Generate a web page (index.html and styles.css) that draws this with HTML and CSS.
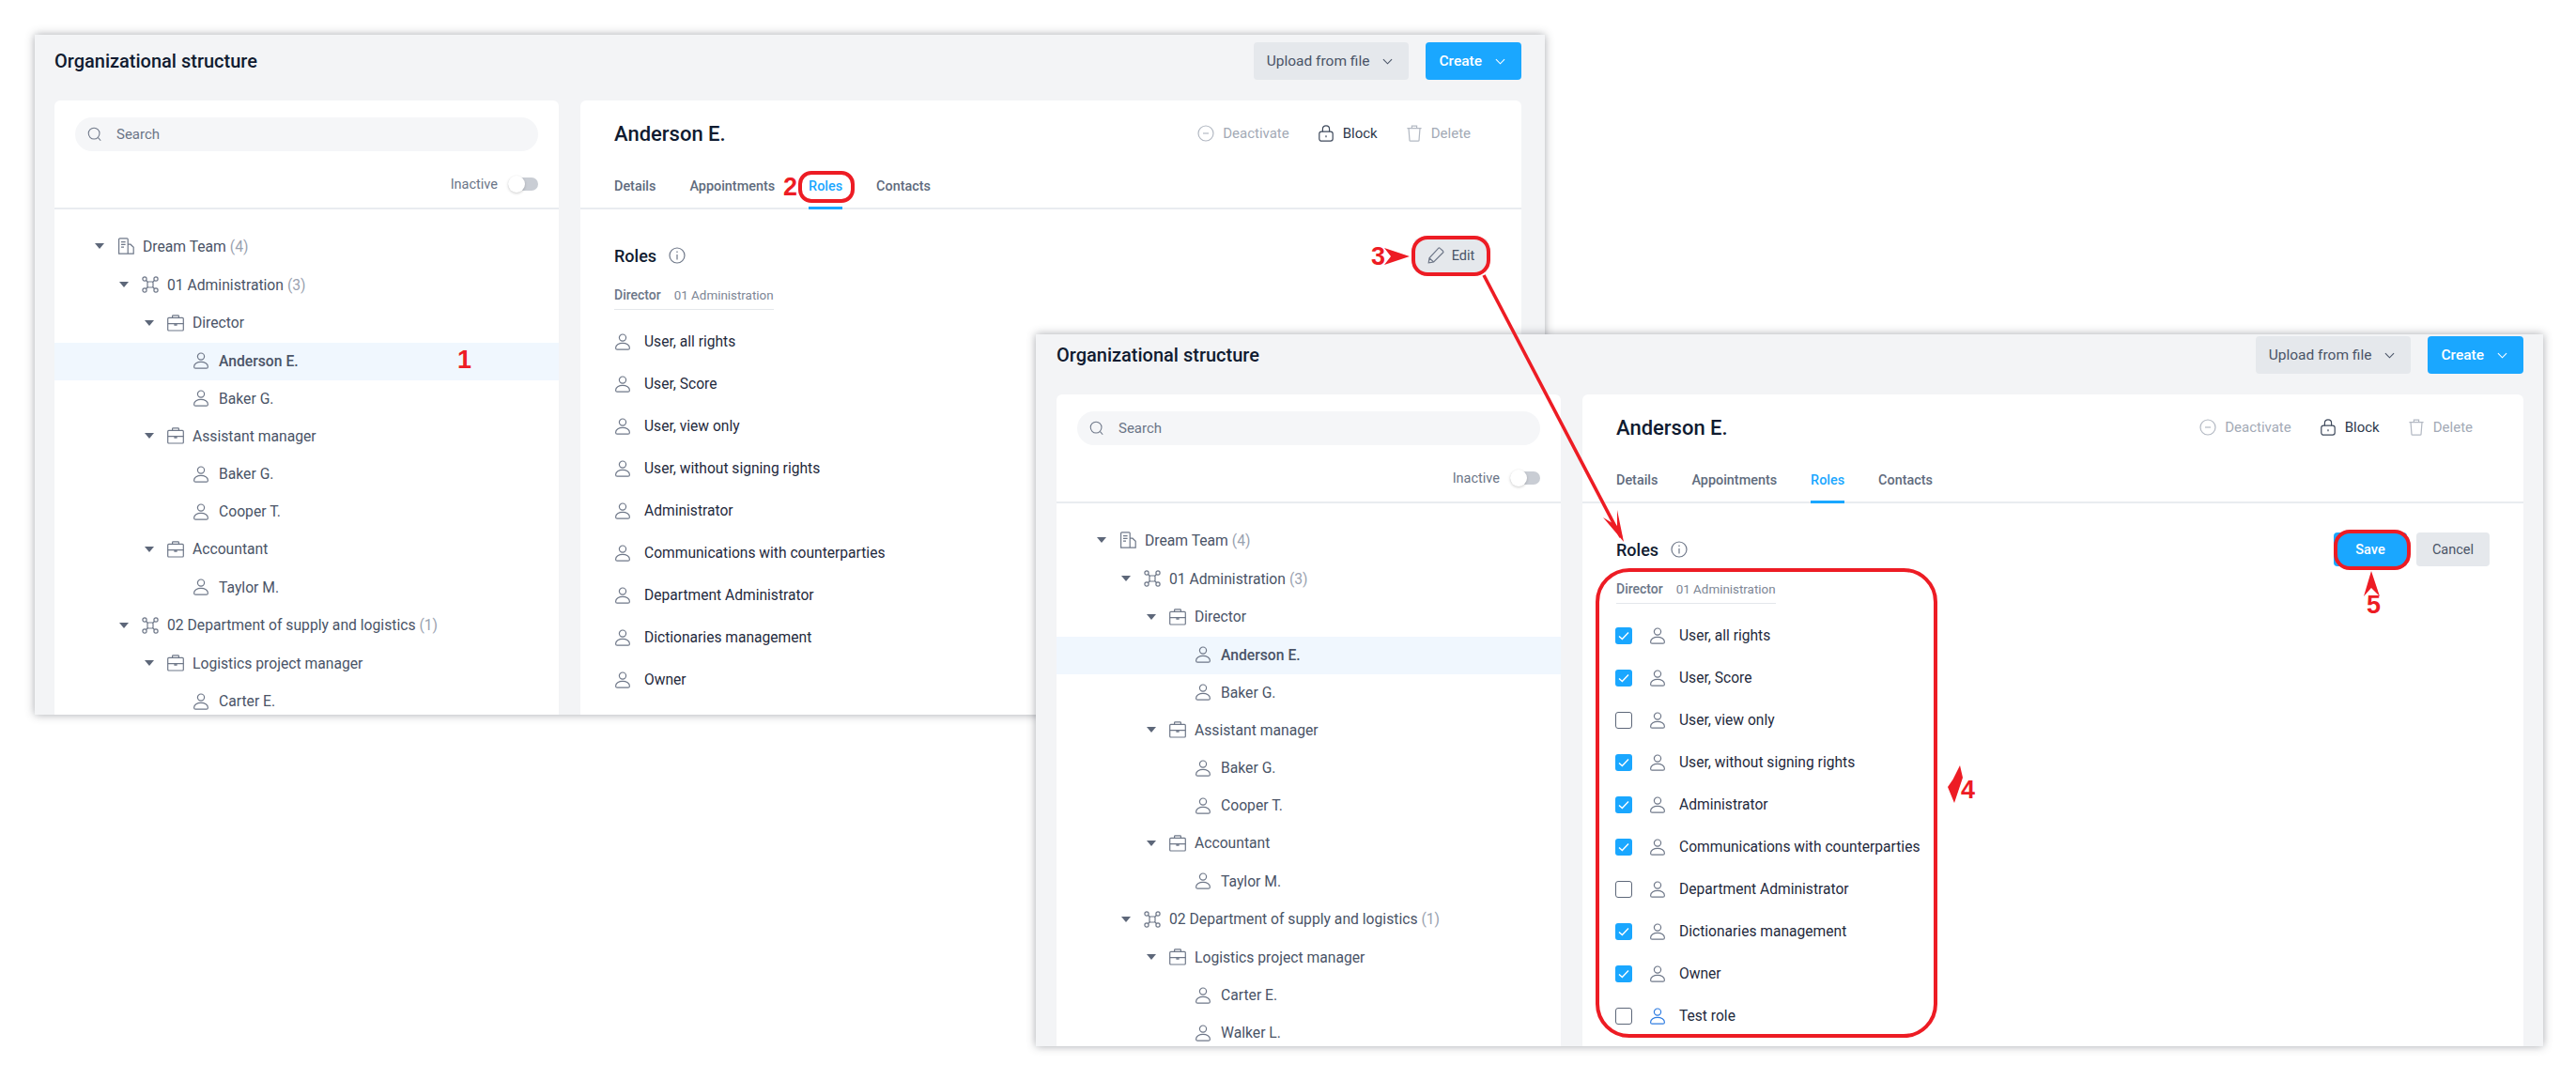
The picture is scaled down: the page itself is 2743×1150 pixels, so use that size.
FILE: index.html
```html
<!doctype html>
<html>
	<head>
		<meta charset="utf-8">
		<title>Organizational structure</title>
		<link rel="stylesheet" href="styles.css">
	</head>
	<body>

		<svg class="sprite" width="0" height="0">
			<symbol id="i-person" viewBox="0 0 18 18"><circle cx="9" cy="4.6" r="3.6"/><path d="M1.6 15.4c0-3 3.4-5 7.4-5s7.4 2 7.4 5c0 1.1-.6 1.8-1.6 1.8H3.2c-1 0-1.6-.7-1.6-1.8z"/></symbol>
			<symbol id="i-building" viewBox="0 0 18 18"><path d="M1.6 17.2V1.8c0-.6.4-1 1-1h7.6c.6 0 1 .4 1 1v15.4zM11.2 7.2h2.8l3.2 3v7h-6M4 4.6h4.6M4 7.4h4.6M4 10.2h3"/></symbol>
			<symbol id="i-network" viewBox="0 0 18 18"><circle cx="3" cy="3" r="2.1"/><circle cx="15" cy="3" r="2.1"/><circle cx="3" cy="15" r="2.1"/><circle cx="15" cy="15" r="2.1"/><rect x="6" y="6" width="6" height="6" rx="1.2"/><path d="M4.5 4.5L6.5 6.5M13.5 4.5L11.5 6.5M4.5 13.5L6.5 11.5M13.5 13.5L11.5 11.5"/></symbol>
			<symbol id="i-case" viewBox="0 0 18 18"><rect x=".7" y="3.4" width="16.6" height="13.6" rx="1"/><path d="M5.6 3.4V1.6c0-.5.3-.8.8-.8h5.2c.5 0 .8.3.8.8v1.8M.7 9.6h16.6M8 9.6v1.6h2V9.6"/></symbol>
			<symbol id="i-search" viewBox="0 0 18 18"><circle cx="8" cy="8" r="6.6"/><path d="M13 13l3 3.6"/></symbol>
			<symbol id="i-minus" viewBox="0 0 18 18"><circle cx="9" cy="9" r="8"/><path d="M6 9h6"/></symbol>
			<symbol id="i-lock" viewBox="0 0 18 18"><rect x="1.8" y="7.2" width="14.4" height="10" rx="2.4"/><path d="M5.4 7.2V4.4C5.4 2.2 6.8.8 9 .8s3.6 1.4 3.6 3.6v2.8M9 11.2v2"/></symbol>
			<symbol id="i-trash" viewBox="0 0 18 18"><path d="M1.4 3.6h15.2M6.4 3.6V1.2h5.2v2.4M3 3.6l1 13c0 .4.4.6.9.6h8.2c.5 0 .9-.2.9-.6l1-13"/></symbol>
			<symbol id="i-pencil" viewBox="0 0 18 18"><path d="M1.2 16.8l.8-5L11.6 1.4c.5-.5 1.2-.5 1.7 0l3.2 2.9c.5.5.5 1.2 0 1.7L6.6 16zM2 11.8l4.6 4.2"/></symbol>
			<symbol id="i-info" viewBox="0 0 18 18"><circle cx="9" cy="9" r="8"/><path d="M9 8v5.4M9 4.6v1.4"/></symbol>
			<symbol id="i-chevron" viewBox="0 0 12 7"><path d="M1 1l5 5 5-5"/></symbol>
			<symbol id="i-check" viewBox="0 0 18 18"><path d="M4 9.4l3.4 3.2L14 5.6"/></symbol>
		</svg>

		<!-- first window, tree and read-only roles -->
		<div class="window window-view">
			<div class="window-head">
				<h1 class="window-title">Organizational structure</h1>
				<div class="head-buttons">
					<button class="btn btn-grey">Upload from file<svg class="chevron"><use href="#i-chevron"/></svg></button>
					<button class="btn btn-blue">Create<svg class="chevron"><use href="#i-chevron"/></svg></button>
				</div>
			</div>
			<div class="window-body">
				<div class="card tree-card">
					<div class="tree-head">
						<div class="search"><svg class="icon search-icon"><use href="#i-search"/></svg><span>Search</span></div>
						<div class="inactive"><span>Inactive</span><span class="toggle"><span class="knob"></span></span></div>
					</div>
					<div class="tree">
						<div class="row lv0"><span class="caret"></span><svg class="icon"><use href="#i-building"/></svg><span>Dream Team <em>(4)</em></span></div>
						<div class="row lv1"><span class="caret"></span><svg class="icon"><use href="#i-network"/></svg><span>01 Administration <em>(3)</em></span></div>
						<div class="row lv2"><span class="caret"></span><svg class="icon"><use href="#i-case"/></svg><span>Director</span></div>
						<div class="row lv3 selected"><svg class="icon"><use href="#i-person"/></svg><span>Anderson E.</span></div>
						<div class="row lv3"><svg class="icon"><use href="#i-person"/></svg><span>Baker G.</span></div>
						<div class="row lv2"><span class="caret"></span><svg class="icon"><use href="#i-case"/></svg><span>Assistant manager</span></div>
						<div class="row lv3"><svg class="icon"><use href="#i-person"/></svg><span>Baker G.</span></div>
						<div class="row lv3"><svg class="icon"><use href="#i-person"/></svg><span>Cooper T.</span></div>
						<div class="row lv2"><span class="caret"></span><svg class="icon"><use href="#i-case"/></svg><span>Accountant</span></div>
						<div class="row lv3"><svg class="icon"><use href="#i-person"/></svg><span>Taylor M.</span></div>
						<div class="row lv1"><span class="caret"></span><svg class="icon"><use href="#i-network"/></svg><span>02 Department of supply and logistics <em>(1)</em></span></div>
						<div class="row lv2"><span class="caret"></span><svg class="icon"><use href="#i-case"/></svg><span>Logistics project manager</span></div>
						<div class="row lv3"><svg class="icon"><use href="#i-person"/></svg><span>Carter E.</span></div>
					</div>
				</div>
				<div class="card detail-card">
					<div class="detail-head">
						<div class="name-row">
							<h2 class="person-name">Anderson E.</h2>
							<div class="actions">
								<span class="action off"><svg class="icon"><use href="#i-minus"/></svg>Deactivate</span>
								<span class="action"><svg class="icon"><use href="#i-lock"/></svg>Block</span>
								<span class="action off"><svg class="icon"><use href="#i-trash"/></svg>Delete</span>
							</div>
						</div>
						<div class="tabs">
							<span class="tab">Details</span>
							<span class="tab">Appointments</span>
							<span class="tab active">Roles</span>
							<span class="tab">Contacts</span>
						</div>
					</div>
					<div class="detail-body">
						<div class="roles-head">
							<div class="roles-title">Roles<svg class="icon"><use href="#i-info"/></svg></div>
							<div class="roles-buttons">
								<button class="btn btn-small btn-grey"><svg class="icon"><use href="#i-pencil"/></svg>Edit</button>
							</div>
						</div>
						<div class="appointment"><b>Director</b><span>01 Administration</span></div>
						<div class="roles">
							<div class="role"><svg class="icon"><use href="#i-person"/></svg>User, all rights</div>
							<div class="role"><svg class="icon"><use href="#i-person"/></svg>User, Score</div>
							<div class="role"><svg class="icon"><use href="#i-person"/></svg>User, view only</div>
							<div class="role"><svg class="icon"><use href="#i-person"/></svg>User, without signing rights</div>
							<div class="role"><svg class="icon"><use href="#i-person"/></svg>Administrator</div>
							<div class="role"><svg class="icon"><use href="#i-person"/></svg>Communications with counterparties</div>
							<div class="role"><svg class="icon"><use href="#i-person"/></svg>Department Administrator</div>
							<div class="role"><svg class="icon"><use href="#i-person"/></svg>Dictionaries management</div>
							<div class="role"><svg class="icon"><use href="#i-person"/></svg>Owner</div>
						</div>
					</div>
				</div>
			</div>
		</div>

		<!-- second window, roles in edit mode -->
		<div class="window window-edit">
			<div class="window-head">
				<h1 class="window-title">Organizational structure</h1>
				<div class="head-buttons">
					<button class="btn btn-grey">Upload from file<svg class="chevron"><use href="#i-chevron"/></svg></button>
					<button class="btn btn-blue">Create<svg class="chevron"><use href="#i-chevron"/></svg></button>
				</div>
			</div>
			<div class="window-body">
				<div class="card tree-card">
					<div class="tree-head">
						<div class="search"><svg class="icon search-icon"><use href="#i-search"/></svg><span>Search</span></div>
						<div class="inactive"><span>Inactive</span><span class="toggle"><span class="knob"></span></span></div>
					</div>
					<div class="tree">
						<div class="row lv0"><span class="caret"></span><svg class="icon"><use href="#i-building"/></svg><span>Dream Team <em>(4)</em></span></div>
						<div class="row lv1"><span class="caret"></span><svg class="icon"><use href="#i-network"/></svg><span>01 Administration <em>(3)</em></span></div>
						<div class="row lv2"><span class="caret"></span><svg class="icon"><use href="#i-case"/></svg><span>Director</span></div>
						<div class="row lv3 selected"><svg class="icon"><use href="#i-person"/></svg><span>Anderson E.</span></div>
						<div class="row lv3"><svg class="icon"><use href="#i-person"/></svg><span>Baker G.</span></div>
						<div class="row lv2"><span class="caret"></span><svg class="icon"><use href="#i-case"/></svg><span>Assistant manager</span></div>
						<div class="row lv3"><svg class="icon"><use href="#i-person"/></svg><span>Baker G.</span></div>
						<div class="row lv3"><svg class="icon"><use href="#i-person"/></svg><span>Cooper T.</span></div>
						<div class="row lv2"><span class="caret"></span><svg class="icon"><use href="#i-case"/></svg><span>Accountant</span></div>
						<div class="row lv3"><svg class="icon"><use href="#i-person"/></svg><span>Taylor M.</span></div>
						<div class="row lv1"><span class="caret"></span><svg class="icon"><use href="#i-network"/></svg><span>02 Department of supply and logistics <em>(1)</em></span></div>
						<div class="row lv2"><span class="caret"></span><svg class="icon"><use href="#i-case"/></svg><span>Logistics project manager</span></div>
						<div class="row lv3"><svg class="icon"><use href="#i-person"/></svg><span>Carter E.</span></div>
						<div class="row lv3"><svg class="icon"><use href="#i-person"/></svg><span>Walker L.</span></div>
					</div>
				</div>
				<div class="card detail-card">
					<div class="detail-head">
						<div class="name-row">
							<h2 class="person-name">Anderson E.</h2>
							<div class="actions">
								<span class="action off"><svg class="icon"><use href="#i-minus"/></svg>Deactivate</span>
								<span class="action"><svg class="icon"><use href="#i-lock"/></svg>Block</span>
								<span class="action off"><svg class="icon"><use href="#i-trash"/></svg>Delete</span>
							</div>
						</div>
						<div class="tabs">
							<span class="tab">Details</span>
							<span class="tab">Appointments</span>
							<span class="tab active">Roles</span>
							<span class="tab">Contacts</span>
						</div>
					</div>
					<div class="detail-body">
						<div class="roles-head">
							<div class="roles-title">Roles<svg class="icon"><use href="#i-info"/></svg></div>
							<div class="roles-buttons">
								<button class="btn btn-small btn-blue">Save</button>
								<button class="btn btn-small btn-grey">Cancel</button>
							</div>
						</div>
						<div class="appointment"><b>Director</b><span>01 Administration</span></div>
						<div class="roles">
							<div class="role"><span class="check on"><svg><use href="#i-check"/></svg></span><svg class="icon"><use href="#i-person"/></svg>User, all rights</div>
							<div class="role"><span class="check on"><svg><use href="#i-check"/></svg></span><svg class="icon"><use href="#i-person"/></svg>User, Score</div>
							<div class="role"><span class="check"></span><svg class="icon"><use href="#i-person"/></svg>User, view only</div>
							<div class="role"><span class="check on"><svg><use href="#i-check"/></svg></span><svg class="icon"><use href="#i-person"/></svg>User, without signing rights</div>
							<div class="role"><span class="check on"><svg><use href="#i-check"/></svg></span><svg class="icon"><use href="#i-person"/></svg>Administrator</div>
							<div class="role"><span class="check on"><svg><use href="#i-check"/></svg></span><svg class="icon"><use href="#i-person"/></svg>Communications with counterparties</div>
							<div class="role"><span class="check"></span><svg class="icon"><use href="#i-person"/></svg>Department Administrator</div>
							<div class="role"><span class="check on"><svg><use href="#i-check"/></svg></span><svg class="icon"><use href="#i-person"/></svg>Dictionaries management</div>
							<div class="role"><span class="check on"><svg><use href="#i-check"/></svg></span><svg class="icon"><use href="#i-person"/></svg>Owner</div>
							<div class="role custom"><span class="check"></span><svg class="icon"><use href="#i-person"/></svg>Test role</div>
						</div>
					</div>
				</div>
			</div>
		</div>

		<!-- red annotations drawn over the two windows -->
		<svg class="arrows" viewBox="0 0 2743 1150">
			<path class="arrow-line" d="M1580 293L1726 572"/>
			<polygon points="1729,577 1707,551 1722,560 1722,543"/>
			<polygon points="1474,264 1481,273 1474,282 1501,273"/>
			<polygon points="2525,608 2517,635 2525,626 2534,635"/>
			<polygon points="2087,815 2090,828 2081,855 2074,838 2079.5,830"/>
		</svg>
		<span class="mark mark-tab"></span>
		<span class="mark mark-edit"></span>
		<span class="mark mark-save"></span>
		<span class="mark mark-roles"></span>
		<span class="num num-1">1</span>
		<span class="num num-2">2</span>
		<span class="num num-3">3</span>
		<span class="num num-4">4</span>
		<span class="num num-5">5</span>

	</body>
</html>
```

FILE: styles.css
```css
* {
	box-sizing: border-box;
}

html, body {
	margin: 0;
	height: 1150px;
	overflow: hidden;
	background: #fff;
}

body {
	position: relative;
	font-family: Roboto, "Liberation Sans", sans-serif;
	font-size: 15px;
	color: #4a5467;
}

.sprite {
	position: absolute;
}

.icon {
	width: 18px;
	height: 18px;
	flex: none;
	fill: none;
	stroke: #6f7889;
	stroke-width: 1.2;
}

/* windows sit on a free canvas */
.window {
	position: absolute;
	overflow: hidden;
	background: #f3f4f6;
	box-shadow: 0 0 9px rgba(60,65,75,0.45);
}

.window-view {
	left: 37px;
	top: 37px;
	width: 1608px;
	height: 724px;
	padding: 0 25px 0 21px;
	z-index: 1;
}

.window-edit {
	left: 1103px;
	top: 356px;
	width: 1605px;
	height: 758px;
	padding: 0 21px 0 22px;
	z-index: 2;
}

.window-head {
	display: flex;
	align-items: center;
	justify-content: space-between;
	padding: 8px 0 22px;
}
.window-edit .window-head {
	padding-top: 2px;
}

.window-title {
	margin: 0;
	font-size: 20px;
	font-weight: 500;
	color: #101b30;
}

.head-buttons {
	display: flex;
	gap: 18px;
}

.btn {
	display: flex;
	align-items: center;
	justify-content: center;
	height: 40px;
	padding: 0 17px 0 14px;
	border: none;
	border-radius: 4px;
	font-family: inherit;
	font-size: 15.5px;
}

.btn-grey {
	background: #e5e8ec;
	color: #4a5467;
}

.btn-blue {
	background: #1aa7ff;
	color: #fff;
	font-weight: 500;
}

.btn-small {
	height: 36px;
	width: 78px;
	padding: 0;
	font-size: 14.5px;
}
.btn-small .icon {
	margin-right: 8px;
}

.chevron {
	width: 11px;
	height: 7px;
	margin-left: 14px;
	fill: none;
	stroke: currentColor;
	stroke-width: 1.2;
}

.window-body {
	display: flex;
	gap: 23px;
}

.card {
	height: 800px;
	background: #fff;
	border-radius: 6px;
}

.tree-card {
	width: 537px;
	flex: none;
}

.detail-card {
	flex: 1;
}

/* left column */
.tree-head {
	height: 116px;
	padding: 18px 22px 0;
	border-bottom: 2px solid #e9ecf0;
}

.search {
	display: flex;
	align-items: center;
	height: 36px;
	padding-left: 13px;
	border-radius: 18px;
	background: #f5f6f8;
	font-size: 15px;
	color: #6b7587;
}
.search-icon {
	width: 16px;
	height: 16px;
	margin-right: 15px;
}

.inactive {
	display: flex;
	align-items: center;
	justify-content: flex-end;
	gap: 11px;
	height: 24px;
	margin-top: 23px;
	font-size: 14.5px;
	color: #6b7587;
}

.toggle {
	position: relative;
	width: 32px;
	height: 14px;
	border-radius: 7px;
	background: #c9cdd4;
}
.knob {
	position: absolute;
	left: 0;
	top: -2px;
	width: 18px;
	height: 18px;
	border-radius: 50%;
	background: #fff;
	box-shadow: 0 1px 3px rgba(0,0,0,0.2);
}

.tree {
	padding-top: 19.5px;
}

.row {
	display: flex;
	align-items: center;
	height: 40px;
	padding-bottom: 2px;
	font-size: 15.7px;
}
.row .icon {
	margin-right: 9px;
}
.row em {
	font-style: normal;
	color: #9aa2b0;
}

.caret {
	flex: none;
	width: 0;
	height: 0;
	margin-right: 14px;
	border-left: 5px solid transparent;
	border-right: 5px solid transparent;
	border-top: 6px solid #5d6779;
}

.lv0 {
	height: 41px;
	padding-left: 43px;
}
.lv1 {
	height: 41px;
	padding-left: 69px;
}
.lv2 {
	height: 40.5px;
	padding-left: 96px;
}
.lv3 {
	padding-left: 147px;
}
.lv3 .icon {
	margin-right: 10px;
}

.selected {
	background: #f0f7fe;
	font-weight: 500;
}

/* right column */
.detail-head {
	height: 116px;
	padding: 0 36px;
	border-bottom: 2px solid #e9ecf0;
}

.name-row {
	display: flex;
	align-items: center;
	justify-content: space-between;
	height: 70px;
}

.person-name {
	margin: 0;
	font-size: 22px;
	font-weight: 500;
	color: #101b30;
}

.actions {
	display: flex;
	gap: 30px;
	padding-right: 18px;
}

.action {
	display: flex;
	align-items: center;
	gap: 9px;
	font-size: 15px;
	color: #2f3a4c;
}
.action .icon {
	stroke: #3f4a5c;
}
.action.off {
	color: #a3aab6;
}
.action.off .icon {
	stroke: #b3b9c3;
}

.tabs {
	display: flex;
	gap: 36px;
	height: 44px;
}

.tab {
	height: 46px;
	line-height: 44px;
	font-size: 14.4px;
	font-weight: 500;
	color: #606b7d;
}
.tab.active {
	color: #1aa7ff;
	border-bottom: 3px solid #1aa7ff;
}

.detail-body {
	padding: 31px 36px 0;
}

.roles-head {
	display: flex;
	align-items: center;
	justify-content: space-between;
	height: 36px;
}

.roles-title {
	display: flex;
	align-items: center;
	gap: 13px;
	font-size: 18px;
	font-weight: 500;
	color: #101b30;
}

.roles-buttons {
	display: flex;
	gap: 10px;
}

.appointment {
	display: flex;
	align-items: center;
	gap: 14px;
	width: fit-content;
	height: 30px;
	margin-top: 10px;
	padding-bottom: 1px;
	border-bottom: 1px solid #e4e7eb;
	font-size: 14px;
	color: #6b7587;
}
.appointment b {
	font-weight: 500;
}
.appointment span {
	font-size: 13.4px;
	color: #7d8695;
}

.roles {
	margin-top: 11.5px;
}

.role {
	display: flex;
	align-items: center;
	gap: 14px;
	height: 45px;
	padding-bottom: 1px;
	font-size: 15.6px;
	color: #1f2a3d;
}
.role .icon {
	margin-top: 1px;
}
.role.custom .icon {
	stroke: #2f7de1;
}

.check {
	flex: none;
	display: block;
	width: 18px;
	height: 18px;
	margin: 1px 4px 0 -1px;
	border: 1.5px solid #5d6779;
	border-radius: 3px;
}
.check.on {
	border: none;
	background: #1aa7ff;
}
.check svg {
	display: block;
	width: 18px;
	height: 18px;
	fill: none;
	stroke: #fff;
	stroke-width: 1.4;
}

/* annotations */
.arrows {
	position: absolute;
	left: 0;
	top: 0;
	width: 2743px;
	height: 1150px;
	z-index: 3;
	fill: #ed1c24;
}
.arrow-line {
	fill: none;
	stroke: #ed1c24;
	stroke-width: 3.6;
}

.mark {
	position: absolute;
	z-index: 3;
	border: 4px solid #ed1c24;
}
.mark-tab {
	left: 850px;
	top: 182px;
	width: 60px;
	height: 34px;
	border-radius: 14px;
}
.mark-edit {
	left: 1503px;
	top: 251px;
	width: 84px;
	height: 43px;
	border-radius: 17px;
}
.mark-save {
	left: 2485px;
	top: 564px;
	width: 82px;
	height: 43px;
	border-radius: 17px;
}
.mark-roles {
	left: 1699px;
	top: 605px;
	width: 364px;
	height: 500px;
	border-radius: 36px;
}

.num {
	position: absolute;
	z-index: 3;
	font-family: "Liberation Sans", sans-serif;
	font-size: 27px;
	font-weight: bold;
	line-height: 30px;
	color: #ed1c24;
}
.num-1 {
	left: 487px;
	top: 368px;
}
.num-2 {
	left: 834px;
	top: 184px;
}
.num-3 {
	left: 1460px;
	top: 258px;
}
.num-4 {
	left: 2088px;
	top: 826px;
}
.num-5 {
	left: 2520px;
	top: 629px;
}
```
